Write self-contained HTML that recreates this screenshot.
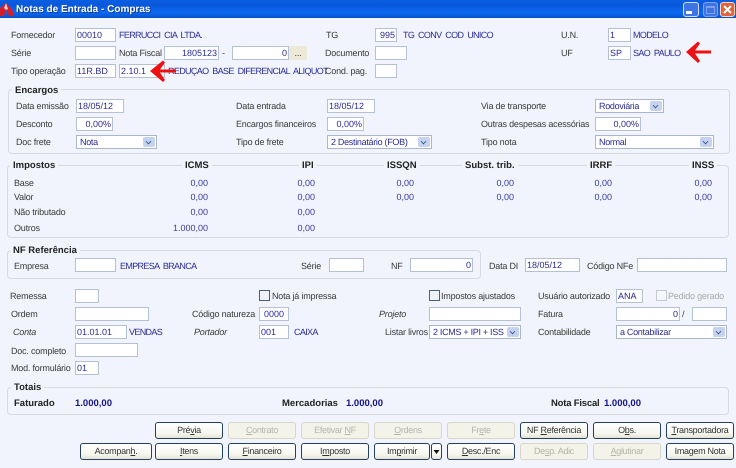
<!DOCTYPE html>
<html><head><meta charset="utf-8"><style>
html,body{margin:0;padding:0}
body{width:736px;height:468px;position:relative;overflow:hidden;background:#f1f4fc;font:9px/13px "Liberation Sans",sans-serif;color:#3a3a3a;letter-spacing:-.2px;text-rendering:geometricPrecision}
div{position:absolute;box-sizing:border-box;white-space:nowrap}
#w{left:0;top:0;width:736px;height:468px;filter:blur(.3px)}
.t{background:linear-gradient(#0a5ee0,#0a58dc 30%,#0c6af2 70%,#0650c8);left:0;top:0;width:736px;height:18px}
.l{height:13px;margin-top:1px}
.v{height:13px;margin-top:1px;color:#2b2b96;letter-spacing:-.65px;word-spacing:2px}
.r{text-align:right;height:13px;color:#3a3a9e;letter-spacing:0}
.h{font-weight:bold;font-size:9.5px;letter-spacing:0;color:#222;height:13px;background:#f1f4fc;padding:0 3px}
.n{font-weight:bold;font-size:9.5px;letter-spacing:0;color:#222;height:13px}
.m{font-weight:bold;font-size:9.5px;letter-spacing:0;color:#14148c;height:13px}
.i{background:#fff;border:1px solid #b4c0d4;color:#2b2b96;height:14px;line-height:12px;padding:0 1px;letter-spacing:0}
.s{background:#fff;border:1px solid #a9b6cc;color:#2b2b96;height:14px;line-height:13px;padding:0 3px;letter-spacing:-.3px;overflow:hidden}
.s i{position:absolute;right:1px;top:1px;width:12px;height:10px;background:#c5d3f0;border-radius:2px}
.s i:after{content:"";position:absolute;left:3px;top:2px;width:4px;height:4px;border:solid #33507f;border-width:0 1.5px 1.5px 0;transform:rotate(45deg) scale(.8)}
.g{border:1px solid #d6d9de;border-radius:4px}
.b{height:17px;top:422px;width:68px;border:1px solid #24405f;border-radius:3px;background:linear-gradient(#fff,#f6f6ee 70%,#e4e2d6);text-align:center;line-height:15px;color:#333;letter-spacing:-.3px}
.d{border-color:#d8d6c8;color:#b4b4a8;background:#f3f3ea}
.c{width:11px;height:11px;border:1px solid #4a5f78;background:#eef1f6}
u{text-decoration:underline}
</style></head><body><div id="w">
<div class="t"></div>
<svg style="position:absolute;left:0;top:2px" width="14" height="14"><path d="M0 14V6L6 1l6 6 2 7H9L6 8l-2 6z" fill="#d21f2a"/><path d="M6 1l2 6-2 1-2-2z" fill="#f6c9c9"/></svg>
<div style="left:16px;top:3px;height:13px;color:#fff;font-weight:bold;font-size:10px;letter-spacing:0;text-shadow:1px 1px 0 #0a3a9a">Notas de Entrada - Compras</div>
<div style="left:683px;top:2px;width:16px;height:15px;background:#3f74e6;border:1px solid #cfe0ff;border-radius:3px"></div>
<div style="left:686px;top:11px;width:6px;height:3px;background:#fff"></div>
<div style="left:703px;top:2px;width:15px;height:15px;background:#3f74e6;border:1px solid #7fa2ec;border-radius:3px"></div>
<div style="left:706px;top:6px;width:9px;height:8px;border:1px solid #7fa2ec;border-top-width:2px"></div>
<div style="left:720px;top:2px;width:15px;height:15px;background:#e4623a;border:1px solid #f4d8cc;border-radius:3px"></div>
<svg style="position:absolute;left:720px;top:2px" width="15" height="15"><path d="M4 4l7 7M11 4l-7 7" stroke="#fff" stroke-width="2"/></svg>

<div class="l" style="left:11px;top:28px">Fornecedor</div>
<div class="i" style="left:75px;top:28px;width:41px">00010</div>
<div class="v" style="left:119px;top:28px">FERRUCCI CIA LTDA.</div>
<div class="l" style="left:326px;top:28px">TG</div>
<div class="i" style="left:375px;top:28px;width:22px;text-align:right">995</div>
<div class="v" style="left:403px;top:28px">TG CONV COD UNICO</div>
<div class="l" style="left:561px;top:28px">U.N.</div>
<div class="i" style="left:608px;top:28px;width:23px">1</div>
<div class="v" style="left:633px;top:28px">MODELO</div>

<div class="l" style="left:11px;top:46px">Série</div>
<div class="i" style="left:75px;top:46px;width:41px"></div>
<div class="l" style="left:119px;top:46px">Nota Fiscal</div>
<div class="i" style="left:164px;top:46px;width:55px;text-align:right">1805123</div>
<div class="l" style="left:222px;top:46px">-</div>
<div class="i" style="left:232px;top:46px;width:57px;text-align:right">0</div>
<div style="left:289px;top:46px;width:18px;height:14px;background:#ece9d8;text-align:center;line-height:14px;color:#333">...</div>
<div class="l" style="left:325px;top:46px">Documento</div>
<div class="i" style="left:375px;top:46px;width:32px"></div>
<div class="l" style="left:561px;top:46px">UF</div>
<div class="i" style="left:608px;top:46px;width:23px">SP</div>
<div class="v" style="left:633px;top:46px">SAO PAULO</div>

<div class="l" style="left:11px;top:64px">Tipo operação</div>
<div class="i" style="left:75px;top:64px;width:41px">11R.BD</div>
<div class="i" style="left:119px;top:64px;width:46px">2.10.1</div>
<div class="v" style="left:168px;top:64px">REDUÇAO BASE DIFERENCIAL ALIQUOT</div>
<div class="l" style="left:325px;top:64px">Cond. pag.</div>
<div class="i" style="left:375px;top:64px;width:22px"></div>

<div class="g" style="left:8px;top:89px;width:722px;height:65px"></div>
<div class="h" style="left:12px;top:84px">Encargos</div>
<div class="l" style="left:16px;top:99px">Data emissão</div>
<div class="i" style="left:76px;top:99px;width:48px">18/05/12</div>
<div class="l" style="left:236px;top:99px">Data entrada</div>
<div class="i" style="left:327px;top:99px;width:48px">18/05/12</div>
<div class="l" style="left:481px;top:99px">Via de transporte</div>
<div class="s" style="left:595px;top:99px;width:69px">Rodoviária<i></i></div>

<div class="l" style="left:16px;top:117px">Desconto</div>
<div class="i" style="left:76px;top:117px;width:37px;text-align:right">0,00%</div>
<div class="l" style="left:236px;top:117px">Encargos financeiros</div>
<div class="i" style="left:327px;top:117px;width:37px;text-align:right">0,00%</div>
<div class="l" style="left:481px;top:117px">Outras despesas acessórias</div>
<div class="i" style="left:595px;top:117px;width:46px;text-align:right">0,00%</div>

<div class="l" style="left:16px;top:135px">Doc frete</div>
<div class="s" style="left:76px;top:135px;width:81px">Nota<i></i></div>
<div class="l" style="left:236px;top:135px">Tipo de frete</div>
<div class="s" style="left:327px;top:135px;width:105px">2 Destinatário (FOB)<i></i></div>
<div class="l" style="left:481px;top:135px">Tipo nota</div>
<div class="s" style="left:595px;top:135px;width:119px">Normal<i></i></div>

<div class="g" style="left:7px;top:165px;width:722px;height:73px"></div>
<div class="h" style="left:10px;top:159px">Impostos</div>
<div class="h" style="left:182px;top:159px">ICMS</div>
<div class="h" style="left:299px;top:159px">IPI</div>
<div class="h" style="left:384px;top:159px">ISSQN</div>
<div class="h" style="left:462px;top:159px">Subst. trib.</div>
<div class="h" style="left:587px;top:159px">IRRF</div>
<div class="h" style="left:689px;top:159px">INSS</div>

<div class="l" style="left:14px;top:176px">Base</div>
<div class="l" style="left:14px;top:190px">Valor</div>
<div class="l" style="left:14px;top:205px">Não tributado</div>
<div class="l" style="left:14px;top:221px">Outros</div>
<div class="r" style="left:158px;top:177px;width:50px">0,00</div>
<div class="r" style="left:265px;top:177px;width:50px">0,00</div>
<div class="r" style="left:364px;top:177px;width:50px">0,00</div>
<div class="r" style="left:464px;top:177px;width:50px">0,00</div>
<div class="r" style="left:562px;top:177px;width:50px">0,00</div>
<div class="r" style="left:662px;top:177px;width:50px">0,00</div>
<div class="r" style="left:158px;top:191px;width:50px">0,00</div>
<div class="r" style="left:265px;top:191px;width:50px">0,00</div>
<div class="r" style="left:364px;top:191px;width:50px">0,00</div>
<div class="r" style="left:464px;top:191px;width:50px">0,00</div>
<div class="r" style="left:562px;top:191px;width:50px">0,00</div>
<div class="r" style="left:662px;top:191px;width:50px">0,00</div>
<div class="r" style="left:158px;top:206px;width:50px">0,00</div>
<div class="r" style="left:265px;top:206px;width:50px">0,00</div>
<div class="r" style="left:158px;top:222px;width:50px">1.000,00</div>
<div class="r" style="left:265px;top:222px;width:50px">0,00</div>

<div class="g" style="left:7px;top:250px;width:474px;height:29px"></div>
<div class="h" style="left:10px;top:244px">NF Referência</div>
<div class="l" style="left:14px;top:259px">Empresa</div>
<div class="i" style="left:75px;top:258px;width:41px"></div>
<div class="v" style="left:120px;top:259px">EMPRESA BRANCA</div>
<div class="l" style="left:301px;top:259px">Série</div>
<div class="i" style="left:329px;top:258px;width:35px"></div>
<div class="l" style="left:391px;top:259px">NF</div>
<div class="i" style="left:410px;top:258px;width:63px;text-align:right">0</div>
<div class="l" style="left:489px;top:259px">Data DI</div>
<div class="i" style="left:525px;top:258px;width:55px">18/05/12</div>
<div class="l" style="left:587px;top:259px">Código NFe</div>
<div class="i" style="left:637px;top:258px;width:90px"></div>

<div class="l" style="left:10px;top:289px">Remessa</div>
<div class="i" style="left:75px;top:289px;width:24px"></div>
<div class="c" style="left:259px;top:290px"></div>
<div class="l" style="left:272px;top:289px">Nota já impressa</div>
<div class="c" style="left:429px;top:290px"></div>
<div class="l" style="left:441px;top:289px">Impostos ajustados</div>
<div class="l" style="left:538px;top:289px">Usuário autorizado</div>
<div class="i" style="left:616px;top:289px;width:27px">ANA</div>
<div class="c" style="left:656px;top:290px;border-color:#c4c8d0;background:#f6f7fb"></div>
<div class="l" style="left:668px;top:289px;color:#aaa">Pedido gerado</div>

<div class="l" style="left:11px;top:307px">Ordem</div>
<div class="i" style="left:75px;top:307px;width:74px"></div>
<div class="l" style="left:192px;top:307px">Código natureza</div>
<div class="i" style="left:259px;top:307px;width:30px;text-align:center">0000</div>
<div class="l" style="left:379px;top:307px;font-style:italic">Projeto</div>
<div class="i" style="left:429px;top:307px;width:92px"></div>
<div class="l" style="left:538px;top:307px">Fatura</div>
<div class="i" style="left:616px;top:307px;width:64px;text-align:right">0</div>
<div class="l" style="left:682px;top:307px">/</div>
<div class="i" style="left:692px;top:307px;width:35px"></div>

<div class="l" style="left:13px;top:325px;font-style:italic">Conta</div>
<div class="i" style="left:75px;top:325px;width:52px">01.01.01</div>
<div class="v" style="left:129px;top:325px">VENDAS</div>
<div class="l" style="left:194px;top:325px;font-style:italic">Portador</div>
<div class="i" style="left:259px;top:325px;width:30px">001</div>
<div class="v" style="left:294px;top:325px">CAIXA</div>
<div class="l" style="left:385px;top:325px">Listar livros</div>
<div class="s" style="left:429px;top:325px;width:92px">2 ICMS + IPI + ISS<i></i></div>
<div class="l" style="left:538px;top:325px">Contabilidade</div>
<div class="s" style="left:616px;top:325px;width:111px">a Contabilizar<i></i></div>

<div class="l" style="left:11px;top:344px">Doc. completo</div>
<div class="i" style="left:75px;top:343px;width:63px"></div>
<div class="l" style="left:11px;top:361px">Mod. formulário</div>
<div class="i" style="left:75px;top:361px;width:24px">01</div>

<div class="g" style="left:7px;top:387px;width:722px;height:28px"></div>
<div class="h" style="left:11px;top:381px">Totais</div>
<div class="n" style="left:14px;top:397px">Faturado</div>
<div class="m" style="left:75px;top:397px">1.000,00</div>
<div class="n" style="left:282px;top:397px">Mercadorias</div>
<div class="m" style="left:346px;top:397px">1.000,00</div>
<div class="n" style="left:551px;top:397px;letter-spacing:-.2px">Nota Fiscal</div>
<div class="m" style="left:604px;top:397px">1.000,00</div>

<div class="b" style="left:155px">Pré<u>v</u>ia</div>
<div class="b d" style="left:228px"><u>C</u>ontrato</div>
<div class="b d" style="left:301px">Efetivar <u>N</u>F</div>
<div class="b d" style="left:374px"><u>O</u>rdens</div>
<div class="b d" style="left:447px">Fr<u>e</u>te</div>
<div class="b" style="left:520px">NF <u>R</u>eferência</div>
<div class="b" style="left:593px">O<u>b</u>s.</div>
<div class="b" style="left:666px"><u>T</u>ransportadora</div>

<div class="b" style="left:80px;top:443px;width:72px">Acompan<u>h</u>.</div>
<div class="b" style="left:155px;top:443px"><u>I</u>tens</div>
<div class="b" style="left:228px;top:443px"><u>F</u>inanceiro</div>
<div class="b" style="left:301px;top:443px">I<u>m</u>posto</div>
<div class="b" style="left:374px;top:443px;width:56px">Im<u>p</u>rimir</div>
<div class="b" style="left:431px;top:443px;width:11px"></div>
<svg style="position:absolute;left:431px;top:443px" width="11" height="17"><path d="M2.500 7h6L5.500 11z" fill="#111"/></svg>
<div class="b" style="left:447px;top:443px"><u>D</u>esc./Enc</div>
<div class="b d" style="left:520px;top:443px">De<u>s</u>p. Adic</div>
<div class="b d" style="left:593px;top:443px"><u>A</u>glutinar</div>
<div class="b" style="left:666px;top:443px">Imagem Nota</div>

<svg style="position:absolute;left:0;top:0" width="736" height="468"><path d="M176 69.500H160l5-7-2-2-13 10.500 13 11 2-2-5-7.500H176z" fill="#ee1111"/><path d="M711 50.500H695l5-7-2-2-12 10.500 12 11 2-2-5-7.500H711z" fill="#ee1111"/></svg>
</div></body></html>
